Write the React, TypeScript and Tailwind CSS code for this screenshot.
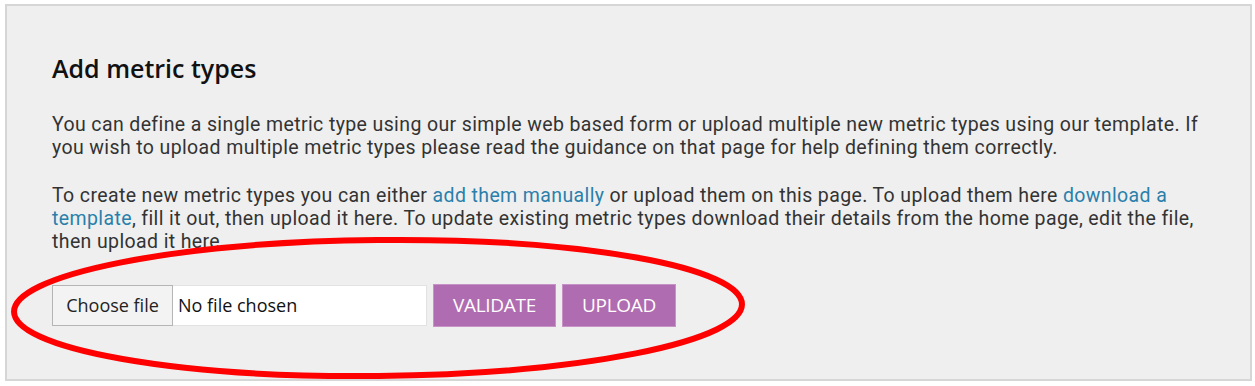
export default function App() {
  return (
    <div className="relative w-[1255px] h-[386px] bg-white pt-[4px] pl-[5px] [font-family:'Open_Sans',sans-serif]">
      <div className="w-[1247px] h-[377px] border-2 border-[#d6d6d6] bg-[#efefef] pl-[45px] pt-[47px] text-[#333333]">
        <h2 className="text-[25px] leading-[30px] font-semibold text-[#111111]">Add metric types</h2>

        <div className="[font-family:Roboto,sans-serif] text-[19.5px] leading-[23px] tracking-[0.38px]">
          <p className="mt-[30px]">
            You can define a single metric type using our simple web based form or upload multiple new metric types using our template. If
            <br />
            you wish to upload multiple metric types please read the guidance on that page for help defining them correctly.
          </p>

          <p className="mt-[25px]">
            To create new metric types you can either <a className="text-[#2a7fab]">add them manually</a> or upload them on this page. To upload them here{" "}
            <a className="text-[#2a7fab]">download a</a>
            <br />
            <a className="text-[#2a7fab]">template</a>, fill it out, then upload it here. To update existing metric types download their details from the home page, edit the file,
            <br />
            then upload it here.
          </p>
        </div>

        <div className="mt-[31px] flex items-center gap-[6px]">
          <div className="flex h-[41px]">
            <button className="w-[121px] h-full border border-[#b5b5b5] bg-[#f3f3f3] text-[18px] text-[#222222]">Choose file</button>
            <div className="w-[254px] h-full bg-white border border-[#e2e2e2] border-l-0 flex items-center pl-[5px] text-[18px] text-[#111111]">
              No file chosen
            </div>
          </div>
          <button className="w-[123px] h-[43px] bg-[#b06cb0] border border-[#c793c7] text-white text-[19px] tracking-[-0.3px]">VALIDATE</button>
          <button className="w-[114px] h-[43px] bg-[#b06cb0] border border-[#c793c7] text-white text-[19px] tracking-[-0.3px]">UPLOAD</button>
        </div>
      </div>

      <svg className="absolute left-0 top-0 pointer-events-none" width="1255" height="386" viewBox="0 0 1255 386">
        <ellipse cx="378" cy="308" rx="364" ry="68" fill="none" stroke="#ff0000" strokeWidth="6" transform="rotate(-0.6 378 308)" />
      </svg>
    </div>
  );
}
